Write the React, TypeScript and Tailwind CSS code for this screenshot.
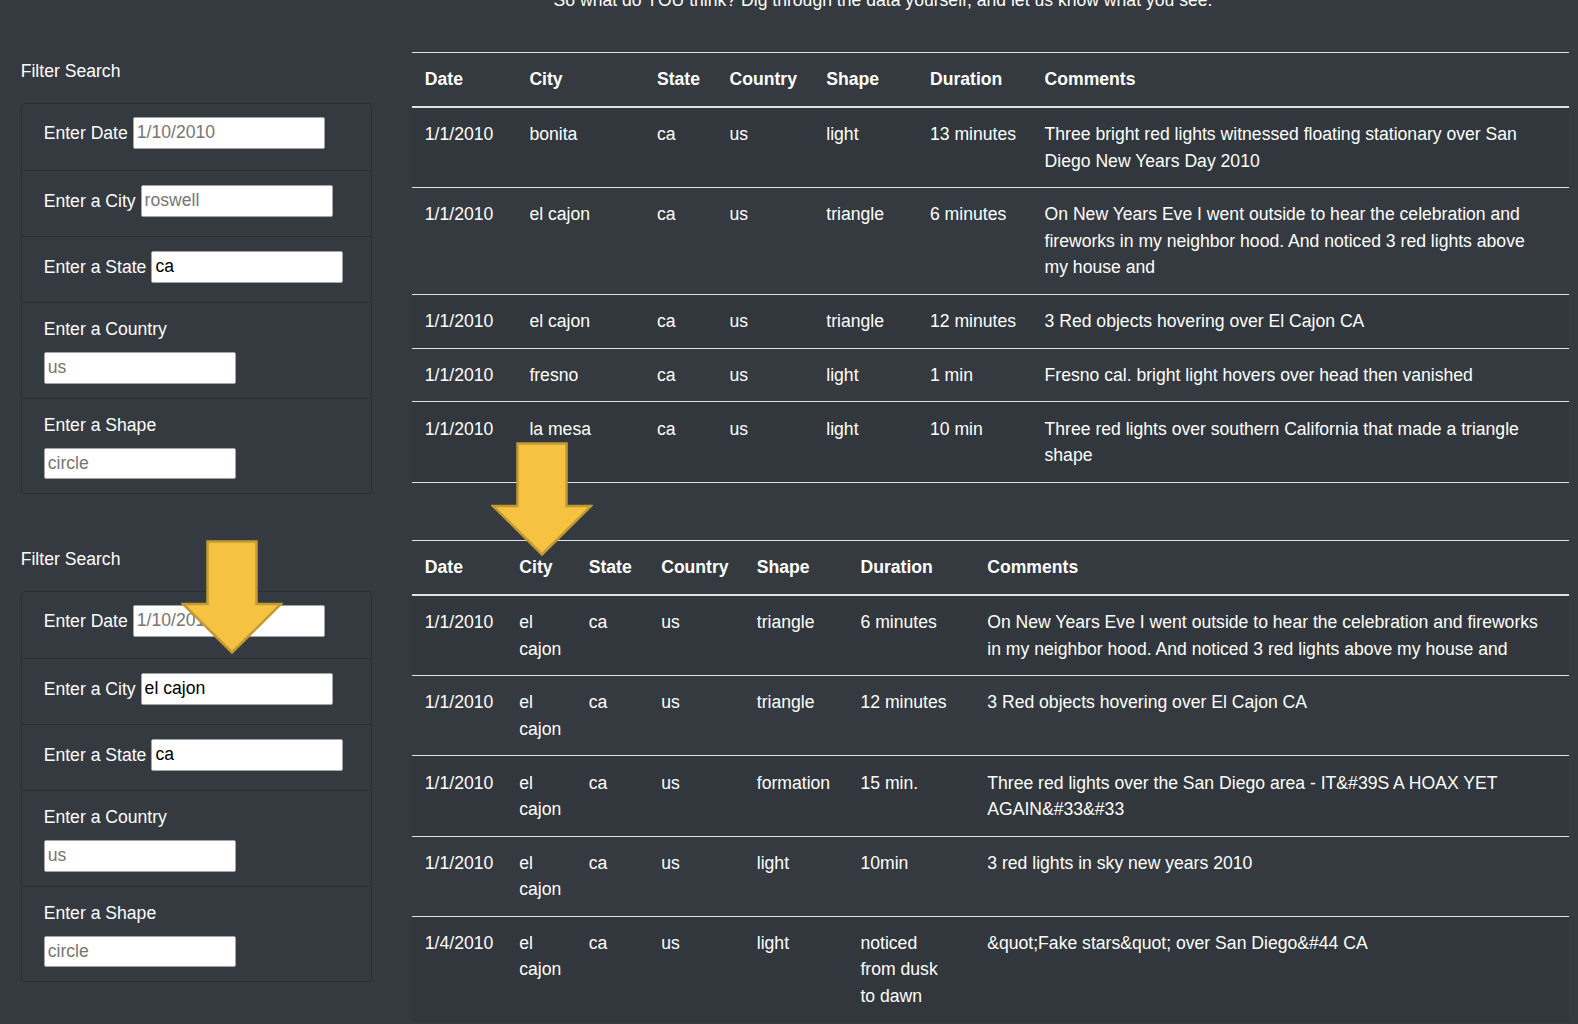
import React from 'react';

type Row = [string, string, string, string, string, string, string];

const firstRows: Row[] = [
  ['1/1/2010', 'bonita', 'ca', 'us', 'light', '13 minutes', 'Three bright red lights witnessed floating stationary over San Diego New Years Day 2010'],
  ['1/1/2010', 'el cajon', 'ca', 'us', 'triangle', '6 minutes', 'On New Years Eve I went outside to hear the celebration and fireworks in my neighbor hood. And noticed 3 red lights above my house and'],
  ['1/1/2010', 'el cajon', 'ca', 'us', 'triangle', '12 minutes', '3 Red objects hovering over El Cajon CA'],
  ['1/1/2010', 'fresno', 'ca', 'us', 'light', '1 min', 'Fresno cal. bright light hovers over head then vanished'],
  ['1/1/2010', 'la mesa', 'ca', 'us', 'light', '10 min', 'Three red lights over southern California that made a triangle shape'],
];

const secondRows: Row[] = [
  ['1/1/2010', 'el cajon', 'ca', 'us', 'triangle', '6 minutes', 'On New Years Eve I went outside to hear the celebration and fireworks in my neighbor hood. And noticed 3 red lights above my house and'],
  ['1/1/2010', 'el cajon', 'ca', 'us', 'triangle', '12 minutes', '3 Red objects hovering over El Cajon CA'],
  ['1/1/2010', 'el cajon', 'ca', 'us', 'formation', '15 min.', 'Three red lights over the San Diego area - IT&#39S A HOAX YET AGAIN&#33&#33'],
  ['1/1/2010', 'el cajon', 'ca', 'us', 'light', '10min', '3 red lights in sky new years 2010'],
  ['1/4/2010', 'el cajon', 'ca', 'us', 'light', 'noticed from dusk to dawn', '&quot;Fake stars&quot; over San Diego&#44 CA'],
];

const headers = ['Date', 'City', 'State', 'Country', 'Shape', 'Duration', 'Comments'];

const inputClass =
  'h-[31.5px] w-[192px] shrink-0 rounded-[2px] border border-[#a5a5a5] bg-white px-[3px] text-[17.6px] text-black outline-none placeholder:text-[#767676]';

function InlineField({ label, placeholder, value, first }: { label: string; placeholder?: string; value?: string; first?: boolean }) {
  return (
    <li className={`h-[66px] px-[22px] ${first ? 'pt-[13px]' : 'border-t border-black/20 pt-[14px]'}`}>
      <label className="flex h-[31.5px] items-center gap-[5px]">
        <span>{label}</span>
        <input className={inputClass} placeholder={placeholder} defaultValue={value} />
      </label>
    </li>
  );
}

function StackedField({ label, placeholder }: { label: string; placeholder: string }) {
  return (
    <li className="h-[95.5px] border-t border-black/20 px-[22px] pt-[13px]">
      <label className="block">
        <span className="block">{label}</span>
        <input className={`${inputClass} mt-[9.5px] block`} placeholder={placeholder} />
      </label>
    </li>
  );
}

function FilterPanel({ city }: { city?: string }) {
  return (
    <aside className="w-[411.6px] shrink-0 pl-[20.7px]">
      <h5 className="mt-[5.5px] mb-[19px]">Filter Search</h5>
      <ul className="w-[351px] rounded-[4px] border border-black/20">
        <InlineField first label="Enter Date" placeholder="1/10/2010" />
        {city ? (
          <InlineField label="Enter a City" value={city} />
        ) : (
          <InlineField label="Enter a City" placeholder="roswell" />
        )}
        <InlineField label="Enter a State" value="ca" />
        <StackedField label="Enter a Country" placeholder="us" />
        <StackedField label="Enter a Shape" placeholder="circle" />
      </ul>
    </aside>
  );
}

// wrap: per-column class for the cell text, so lines break where the original page broke them
function SightingsTable({ rows, cols, wrap, closed }: { rows: Row[]; cols: string[]; wrap: string[]; closed?: boolean }) {
  return (
    <table className="w-[1157px] table-fixed border-collapse text-left">
      <colgroup>
        {cols.map((c, i) => (
          <col key={i} className={c} />
        ))}
      </colgroup>
      <thead>
        <tr className="border-t border-b-2 border-[#dee2e6]">
          {headers.map((h) => (
            <th key={h} className="px-[13.2px] py-[13.2px] align-bottom font-bold">
              {h}
            </th>
          ))}
        </tr>
      </thead>
      <tbody>
        {rows.map((r, i) => (
          <tr
            key={i}
            className={`border-t border-[#dee2e6] ${i % 2 === 0 ? 'bg-black/5' : ''} ${closed && i === rows.length - 1 ? 'border-b' : ''}`}
          >
            {r.map((cell, j) => (
              <td key={j} className="px-[13.2px] py-[13.2px] align-top">
                <div className={wrap[j]}>{cell}</div>
              </td>
            ))}
          </tr>
        ))}
      </tbody>
    </table>
  );
}

function DownArrow({ className }: { className: string }) {
  return (
    <svg className={className} viewBox="0 0 102 114" width="102" height="114">
      <path
        d="M26.5 1.5 H75.5 V64 H100 L51 112.5 L2 64 H26.5 Z"
        fill="#f5c242"
        stroke="#c29a31"
        strokeWidth="2.5"
        strokeLinejoin="miter"
      />
    </svg>
  );
}

export default function App() {
  const firstCols = ['w-[104.6px]', 'w-[127.6px]', 'w-[72.6px]', 'w-[96.7px]', 'w-[103.7px]', 'w-[114.6px]', 'w-[537.2px]'];
  const secondCols = ['w-[94.5px]', 'w-[69.4px]', 'w-[72.5px]', 'w-[95.6px]', 'w-[103.7px]', 'w-[126.8px]', 'w-[594.5px]'];
  const firstWrap = ['', '', '', '', '', 'whitespace-nowrap', 'max-w-[490px]'];
  const secondWrap = ['', '', '', '', '', 'max-w-[93px]', ''];

  return (
    <div className="relative h-[1024px] overflow-hidden bg-[#343a40] font-['Liberation_Sans',Arial,sans-serif] text-[17.6px] leading-[26.4px] text-white">
      <p className="-mt-[13px] pl-[188px] text-center">
        So what do YOU think? Dig through the data yourself, and let us know what you see.
      </p>

      <section className="mt-[38.9px] flex items-start">
        <FilterPanel />
        <SightingsTable rows={firstRows} cols={firstCols} wrap={firstWrap} closed />
      </section>

      <section className="mt-[46px] flex items-start">
        <FilterPanel city="el cajon" />
        <SightingsTable rows={secondRows} cols={secondCols} wrap={secondWrap} />
      </section>

      <DownArrow className="absolute left-[491px] top-[442px]" />
      <DownArrow className="absolute left-[181px] top-[540px]" />
    </div>
  );
}
